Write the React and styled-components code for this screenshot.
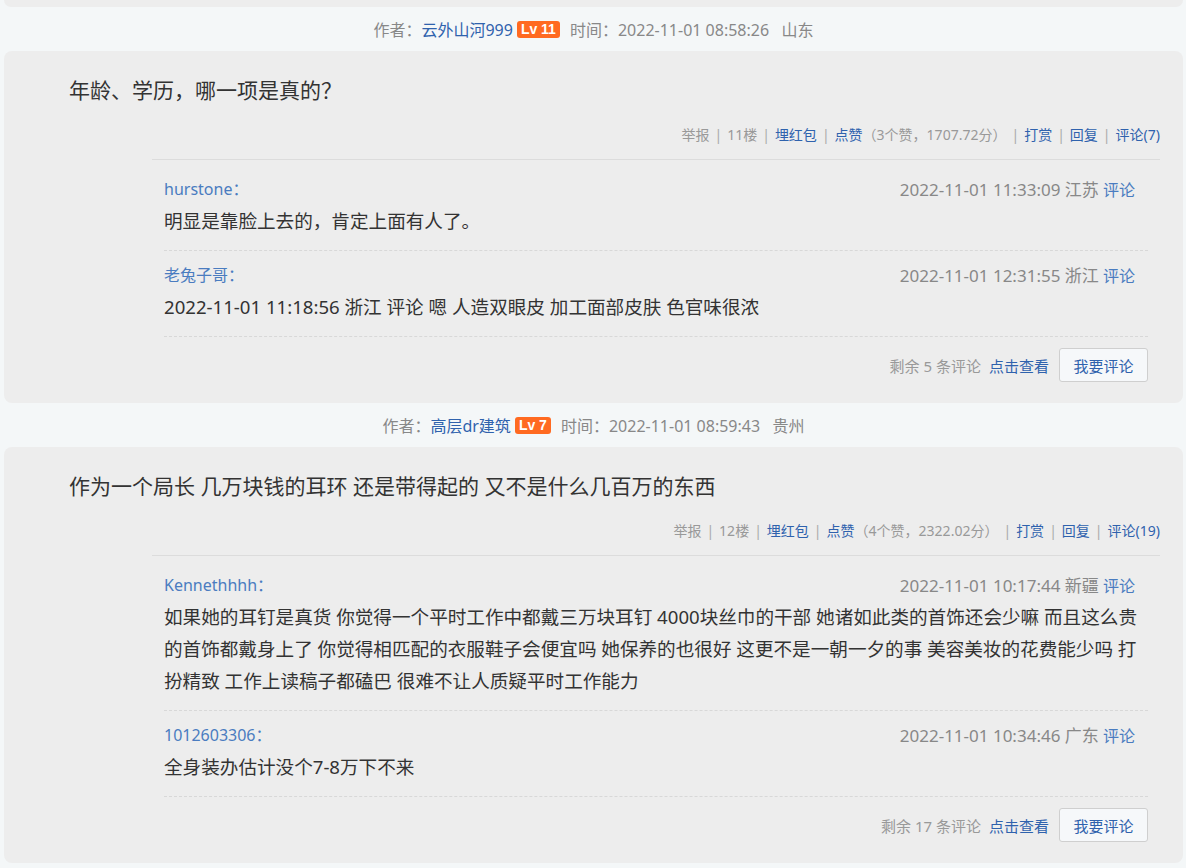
import styled, { createGlobalStyle } from "styled-components";

const GlobalStyle = createGlobalStyle`
  html, body {
    margin: 0;
    padding: 0;
    background: #f4f7f8;
  }
  body {
    font-family: "Noto Sans", "Noto Sans CJK SC", sans-serif;
    color: #333;
    text-spacing-trim: space-all;
  }
`;

const posts = [
  {
    author: "云外山河999",
    level: 11,
    time: "2022-11-01 08:58:26",
    loc: "山东",
    title: "年龄、学历，哪一项是真的？",
    floor: 11,
    likes: 3,
    score: "1707.72",
    comments: 7,
    remain: 5,
    replies: [
      {
        name: "hurstone",
        time: "2022-11-01 11:33:09",
        loc: "江苏",
        text: "明显是靠脸上去的，肯定上面有人了。",
      },
      {
        name: "老兔子哥",
        time: "2022-11-01 12:31:55",
        loc: "浙江",
        text: "2022-11-01 11:18:56 浙江 评论 嗯 人造双眼皮 加工面部皮肤 色官味很浓",
      },
    ],
  },
  {
    author: "高层dr建筑",
    level: 7,
    time: "2022-11-01 08:59:43",
    loc: "贵州",
    title: "作为一个局长 几万块钱的耳环 还是带得起的 又不是什么几百万的东西",
    floor: 12,
    likes: 4,
    score: "2322.02",
    comments: 19,
    remain: 17,
    replies: [
      {
        name: "Kennethhhh",
        time: "2022-11-01 10:17:44",
        loc: "新疆",
        text: "如果她的耳钉是真货 你觉得一个平时工作中都戴三万块耳钉 4000块丝巾的干部 她诸如此类的首饰还会少嘛 而且这么贵 的首饰都戴身上了 你觉得相匹配的衣服鞋子会便宜吗 她保养的也很好 这更不是一朝一夕的事 美容美妆的花费能少吗 打扮精致 工作上读稿子都磕巴 很难不让人质疑平时工作能力",
      },
      {
        name: "1012603306",
        time: "2022-11-01 10:34:46",
        loc: "广东",
        text: "全身装办估计没个7-8万下不来",
      },
    ],
  },
];

const Page = styled.div`
  padding: 0 3px 0 4px;
`;

const CardTail = styled.div`
  height: 7px;
  background: #ededed;
  border-radius: 0 0 8px 8px;
`;

const AuthorLine = styled.div`
  height: 44px;
  display: flex;
  align-items: center;
  justify-content: center;
  font-size: 16px;
  color: #888;
`;

const Link = styled.span`
  color: ${(p) => (p.$light ? "#4a7cc0" : "#2f62ad")};
  cursor: pointer;
`;

const Level = styled.span`
  display: inline-block;
  margin: 0 10px 0 4px;
  padding: 0 4px;
  height: 17px;
  line-height: 17px;
  border-radius: 3px;
  background: #ff6a21;
  color: #fff;
  font-size: 14px;
  font-weight: 700;
  font-family: "Liberation Sans", "Noto Sans", sans-serif;
`;

const Card = styled.div`
  background: #ededed;
  border-radius: 8px;
  padding: 24px 23px 21px 65px;
`;

const Title = styled.div`
  font-size: 21px;
  line-height: 30px;
  color: #333;
`;

const Actions = styled.div`
  margin-top: 20px;
  text-align: right;
  font-size: 14px;
  line-height: 20px;
  color: #999;
`;

const Sep = styled.span`
  color: #aaa;
  margin: 0 5px;
`;

const Replies = styled.div`
  margin: 14px 0 0 83px;
  border-top: 1px solid #dcdcdc;
  padding: 5px 12px 0;
`;

const Reply = styled.div`
  padding: 10px 0 13px;
  border-bottom: 1px dashed #d8d8d8;
`;

const ReplyHead = styled.div`
  display: flex;
  justify-content: space-between;
  align-items: center;
  height: 26px;
  margin-bottom: 4px;
  padding-right: 13px;
  font-size: 16px;
`;

const Meta = styled.span`
  color: #888;
  font-size: 17px;
`;

const ReplyText = styled.div`
  font-size: 18.6px;
  line-height: 32px;
  color: #333;
`;

const Footer = styled.div`
  display: flex;
  justify-content: flex-end;
  align-items: center;
  gap: 8px;
  padding-top: 11px;
  font-size: 15px;
  color: #999;
`;

const Button = styled.button`
  height: 34px;
  width: 89px;
  margin-left: 2px;
  border: 1px solid #cfcfcf;
  border-radius: 3px;
  background: #f6f8fa;
  color: #2f62ad;
  font-family: inherit;
  font-size: 15px;
  cursor: pointer;
`;

const ActionLinks = ({ post }) => (
  <Actions>
    举报<Sep>|</Sep>
    {post.floor}楼<Sep>|</Sep>
    <Link>埋红包</Link>
    <Sep>|</Sep>
    <Link>点赞</Link>（{post.likes}个赞，{post.score}分）<Sep>|</Sep>
    <Link>打赏</Link>
    <Sep>|</Sep>
    <Link>回复</Link>
    <Sep>|</Sep>
    <Link>评论({post.comments})</Link>
  </Actions>
);

const Post = ({ post }) => (
  <>
    <AuthorLine>
      作者：<Link>{post.author}</Link>
      <Level>Lv {post.level}</Level>
      时间：{post.time}&nbsp;&nbsp;&nbsp;{post.loc}
    </AuthorLine>
    <Card>
      <Title>{post.title}</Title>
      <ActionLinks post={post} />
      <Replies>
        {post.replies.map((r) => (
          <Reply key={r.name}>
            <ReplyHead>
              <Link $light>{r.name}：</Link>
              <span>
                <Meta>
                  {r.time} {r.loc}
                </Meta>{" "}
                <Link $light>评论</Link>
              </span>
            </ReplyHead>
            <ReplyText>{r.text}</ReplyText>
          </Reply>
        ))}
        <Footer>
          <span>剩余 {post.remain} 条评论</span>
          <Link>点击查看</Link>
          <Button>我要评论</Button>
        </Footer>
      </Replies>
    </Card>
  </>
);

export default function App() {
  return (
    <Page>
      <GlobalStyle />
      <CardTail />
      {posts.map((p) => (
        <Post key={p.floor} post={p} />
      ))}
    </Page>
  );
}
